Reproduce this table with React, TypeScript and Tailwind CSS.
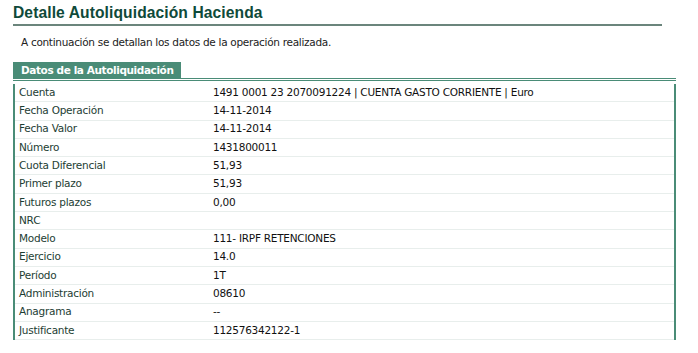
const rows: [string, string][] = [
  ["Cuenta", "1491 0001 23 2070091224 | CUENTA GASTO CORRIENTE | Euro"],
  ["Fecha Operación", "14-11-2014"],
  ["Fecha Valor", "14-11-2014"],
  ["Número", "1431800011"],
  ["Cuota Diferencial", "51,93"],
  ["Primer plazo", "51,93"],
  ["Futuros plazos", "0,00"],
  ["NRC", ""],
  ["Modelo", "111- IRPF RETENCIONES"],
  ["Ejercicio", "14.0"],
  ["Período", "1T"],
  ["Administración", "08610"],
  ["Anagrama", "--"],
  ["Justificante", "112576342122-1"],
];

export default function App() {
  return (
    <div className="w-[698px] h-[353px] bg-white font-['DejaVu_Sans',sans-serif] overflow-hidden">
      {/* Title */}
      <div className="ml-[13px] w-[649px] pt-[3px] border-b-2 border-[#6b857c]">
        <h1 className="font-['Liberation_Sans',sans-serif] text-[15.6px] leading-[20px] pb-[1px] font-bold text-[#0f4a3a] tracking-[0.1px]">
          Detalle Autoliquidación Hacienda
        </h1>
      </div>

      <p className="ml-[21px] mt-[9px] text-[10.5px] leading-[14px] text-[#222] tracking-[-0.3px]">
        A continuación se detallan los datos de la operación realizada.
      </p>

      {/* Section tab */}
      <div className="ml-[13px] mt-[13px] w-[663px]">
        <div className="w-[168px] h-[16px] bg-[#4a8c77] flex items-center pl-[8px]">
          <span className="text-[10.5px] font-bold text-white tracking-[-0.4px] leading-none">
            Datos de la Autoliquidación
          </span>
        </div>
        <div className="border-t border-b border-[#4a8c77] h-[3px]" />

        {/* Table */}
        <div className="mt-[3px] border-l-2 border-r-2 border-[#4a8c77]">
          {rows.map(([label, value]) => (
            <div
              key={label}
              className="flex items-center h-[18.3px] border-b border-[#e8eeec] text-[10.5px] tracking-[-0.25px]"
            >
              <span className="w-[198px] pl-[4px] text-[#1d3d33]">{label}</span>
              <span className="text-[#111]">{value}</span>
            </div>
          ))}
        </div>
      </div>
    </div>
  );
}
